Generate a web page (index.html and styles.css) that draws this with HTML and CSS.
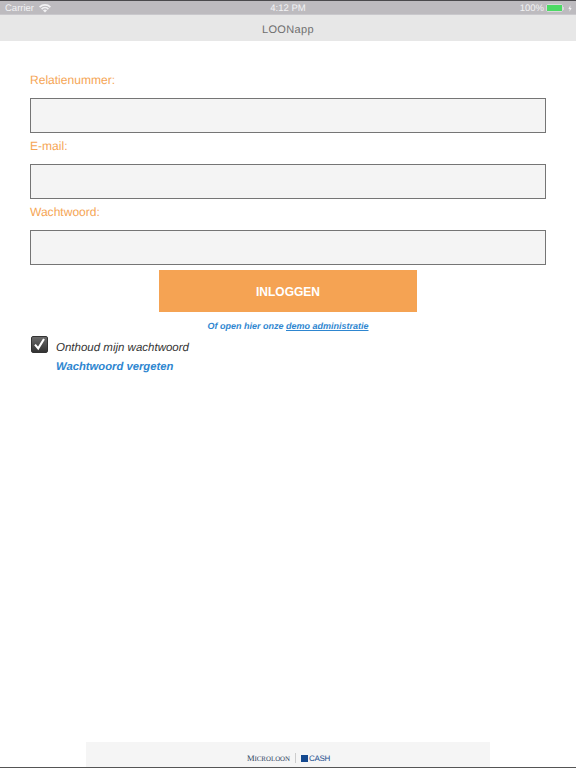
FILE: index.html
```html
<!DOCTYPE html>
<html lang="nl">
<head>
<meta charset="utf-8">
<title>LOONapp</title>
<link rel="stylesheet" href="styles.css">
</head>
<body>
<div class="app">
  <header class="top">
    <div class="status">
      <div class="status-left">
        <span>Carrier</span>
        <svg class="wifi" viewBox="0 0 12 9" width="12" height="9"><path d="M6 8.6 4 6.5A2.9 2.9 0 0 1 8 6.5ZM3.2 5.7 2 4.5A5.7 5.7 0 0 1 10 4.5L8.8 5.7A4 4 0 0 0 3.2 5.7ZM1.2 3.7 0 2.5A8.6 8.6 0 0 1 12 2.5L10.8 3.7A7 7 0 0 0 1.2 3.7Z" fill="#f2f2f4"/></svg>
      </div>
      <div class="status-time">4:12 PM</div>
      <div class="status-right">
        <span>100%</span>
        <span class="battery"><span class="battery-fill"></span></span>
        <span class="nub"></span>
        <svg class="bolt" viewBox="0 0 5 8" width="4" height="7"><path d="M3 0 0.5 4.5H2.2L1.8 8 4.5 3.3H2.8Z" fill="#f2f2f4"/></svg>
      </div>
    </div>
    <div class="titlebar">LOONapp</div>
  </header>
  <main class="form">
    <label class="label">Relatienummer:</label>
    <div class="field"></div>
    <label class="label">E-mail:</label>
    <div class="field"></div>
    <label class="label">Wachtwoord:</label>
    <div class="field"></div>
    <button class="login">INLOGGEN</button>
    <p class="demo">Of open hier onze <a href="#">demo administratie</a></p>
    <div class="remember">
      <span class="check">
        <svg viewBox="0 0 17 17" width="17" height="17"><path d="M4 8.6 7.2 12.4 13 3" fill="none" stroke="#fff" stroke-width="2.1"/></svg>
      </span>
      <span class="remember-text">Onthoud mijn wachtwoord</span>
    </div>
    <a class="forgot" href="#">Wachtwoord vergeten</a>
  </main>
  <footer class="footer">
    <div class="logos">
      <span class="micro">M<small>ICROLOON</small></span>
      <span class="divider"></span>
      <span class="brand"><span class="square"></span><span class="cash">CASH</span></span>
    </div>
  </footer>
</div>
</body>
</html>
```
FILE: styles.css
```css
* { box-sizing: border-box; }
html, body { margin: 0; padding: 0; }
body { font-family: "Liberation Sans", Arial, sans-serif; background: #fff; text-rendering: geometricPrecision; }
.app { width: 576px; height: 768px; display: flex; flex-direction: column; overflow: hidden; border-bottom: 1px solid #555; }
.top { background: #e7e7e7; height: 41px; flex: none; }
.status { height: 15px; padding: 1px 4px 0 5px; background: #bdbbbf; border-top: 1px solid #4a494c; border-bottom: 1px solid #c9c8cc; display: flex; align-items: center; justify-content: space-between; position: relative; color: #f2f2f4; font-size: 9.5px; }
.status-left, .status-right { display: flex; align-items: center; gap: 5px; }
.status-time { position: absolute; left: 0; right: 0; text-align: center; }
.status-right { gap: 0; }
.battery { width: 17px; height: 8px; margin-left: 2px; border: 1px solid #d8d8da; border-radius: 2px; display: block; }
.battery-fill { display: block; height: 100%; background: #4cd964; }
.nub { width: 1px; height: 3px; margin-right: 4px; background: #d8d8da; }
.titlebar { height: 26px; padding-top: 4px; display: flex; align-items: center; justify-content: center; font-size: 11px; letter-spacing: 0.35px; color: #6f6f6f; }
.form { flex: 1; padding: 26px 30px 0; display: flex; flex-direction: column; }
.label { display: block; height: 31px; padding-top: 5px; color: #f5a555; font-size: 12.05px; line-height: 16px; flex: none; }
.field { height: 35px; background: #f4f4f4; border: 1px solid #757575; flex: none; }
.login { width: 258px; height: 42px; margin: 5px auto 0; padding: 2px 0 0; flex: none; border: 0; background: #f5a353; color: #fff; font: bold 12px "Liberation Sans", Arial, sans-serif; }
.demo { margin: 8px 0 0; text-align: center; font-size: 9px; line-height: 12px; font-weight: bold; font-style: italic; color: #2e86d0; }
.demo a { color: #2e86d0; }
.remember { display: flex; align-items: flex-start; gap: 8px; margin: 4px 0 0 1px; height: 19px; }
.check { width: 17px; height: 17px; border-radius: 2px; background: linear-gradient(#6b6b6b, #333); border: 1px solid #333; display: flex; align-items: center; justify-content: center; flex: none; }
.check svg { flex: none; }
.remember-text { font-size: 11.5px; line-height: 16px; margin-top: 4px; font-style: italic; color: #333; }
.forgot { margin: 3px 0 0 26px; padding-top: 1px; font-size: 11.25px; line-height: 16px; font-weight: bold; font-style: italic; color: #2e86d0; text-decoration: none; }
.footer { flex: none; height: 25px; width: 404px; margin: 0 auto; background: #f5f5f5; display: flex; align-items: flex-end; justify-content: center; padding: 0 0 4px 1px; }
.logos { display: flex; align-items: center; gap: 5px; }
.micro { font: 8.5px "Liberation Serif", serif; color: #2d3f5c; }
.micro small { font-size: 6.9px; }
.divider { width: 1px; height: 10px; background: #ccc; }
.brand { display: flex; align-items: center; gap: 1px; }
.square { width: 7px; height: 7px; background: #14498f; }
.cash { font-size: 8px; letter-spacing: -0.3px; color: #1d4f8f; }
```
